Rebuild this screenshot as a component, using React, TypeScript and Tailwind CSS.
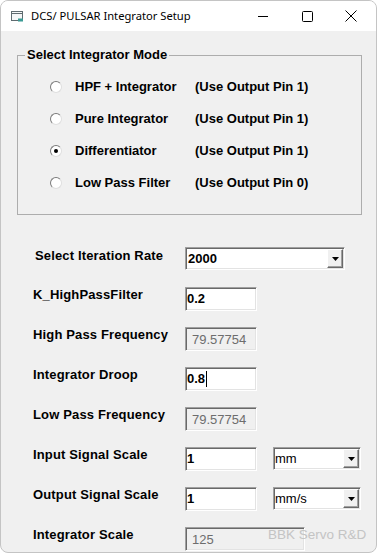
import React from 'react';

const modes = [
  { label: 'HPF + Integrator', pin: '(Use Output Pin 1)', checked: false },
  { label: 'Pure Integrator', pin: '(Use Output Pin 1)', checked: false },
  { label: 'Differentiator', pin: '(Use Output Pin 1)', checked: true },
  { label: 'Low Pass Filter', pin: '(Use Output Pin 0)', checked: false },
];

const sunken =
  'border border-t-[#a0a0a0] border-l-[#a0a0a0] border-r-[#ffffff] border-b-[#ffffff] shadow-[inset_1px_1px_0_#696969,inset_-1px_-1px_0_#e3e3e3]';

const Radio: React.FC<{ checked: boolean }> = ({ checked }) => (
  <div className="w-[12px] h-[12px] rounded-full bg-white border border-t-[#7a7a7a] border-l-[#7a7a7a] border-r-[#dedede] border-b-[#dedede] flex items-center justify-center">
    {checked && <div className="w-[4px] h-[4px] rounded-full bg-black" />}
  </div>
);

const TextBox: React.FC<{ value: string; disabled?: boolean; caret?: boolean; className?: string }> = ({
  value,
  disabled,
  caret,
  className = 'w-[72px]',
}) => (
  <div
    className={`${className} h-[24px] ${sunken} flex items-center ${
      disabled ? 'bg-[#f0f0f0] pl-[6px] pt-[1px] text-[#6d6d6d] font-normal' : 'bg-white pl-[1px] text-black font-bold'
    } text-[13px]`}
  >
    {value}
    {caret && <span className="ml-[1px] w-[1px] h-[16px] bg-black" />}
  </div>
);

const Combo: React.FC<{ value: string; bold?: boolean; className: string }> = ({ value, bold, className }) => (
  <div className={`${className} h-[23px] ${sunken} bg-white flex items-center`}>
    <span className={`flex-1 text-[13px] text-black ${bold ? 'font-bold pl-[2px]' : 'font-normal pl-[1px]'}`}>{value}</span>
    <div className="w-[16px] h-[19px] mr-[1px] bg-[#f0f0f0] border border-t-[#ffffff] border-l-[#ffffff] border-r-[#696969] border-b-[#696969] shadow-[inset_-1px_-1px_0_#a0a0a0] flex items-center justify-center">
      <svg width="7" height="4" viewBox="0 0 7 4">
        <path d="M0 0h7L3.5 4z" fill="#000" />
      </svg>
    </div>
  </div>
);

const Row: React.FC<{ label: string; lx?: string; ly?: string; children: React.ReactNode }> = ({
  label,
  lx = 'pl-[32px]',
  ly = '',
  children,
}) => (
  <div className="h-[40px] flex items-start">
    <div className={`w-[184px] ${lx} ${ly} leading-[16px] text-[13px] font-bold tracking-[0.15px] text-black`}>{label}</div>
    {children}
  </div>
);

export default function App() {
  return (
    <div
      className="w-[377px] h-[553px] overflow-hidden rounded-[8px] border border-[#c4c4c4] bg-[#f0f0f0] flex flex-col"
      style={{ fontFamily: '"Liberation Sans", Arial, sans-serif' }}
    >
      {/* title bar */}
      <div className="h-[30px] bg-white flex items-center shrink-0">
        <svg className="ml-[10px]" width="14" height="11" viewBox="0 0 14 11">
          <rect x="0.5" y="0.5" width="11" height="9" fill="#f4f6f7" stroke="#5f6b70" />
          <path d="M0.5 2.5h11" stroke="#5f6b70" />
          <path d="M7 7.5h5v3H7z" fill="#3a9a94" />
        </svg>
        <span className="ml-[6px] text-[11.2px] text-black" style={{ fontFamily: '"Noto Sans", sans-serif' }}>
          DCS/ PULSAR Integrator Setup
        </span>
        <div className="ml-auto mr-[3px] flex">
          <div className="w-[44px] h-[30px] flex items-center justify-center">
            <svg width="10" height="1" viewBox="0 0 10 1">
              <path d="M0 0.5h10" stroke="#000" />
            </svg>
          </div>
          <div className="w-[44px] h-[30px] flex items-center justify-center">
            <svg width="11" height="11" viewBox="0 0 11 11">
              <rect x="0.5" y="0.5" width="10" height="10" rx="1" fill="none" stroke="#000" />
            </svg>
          </div>
          <div className="w-[44px] h-[30px] flex items-center justify-center">
            <svg width="12" height="12" viewBox="0 0 12 12">
              <path d="M0.5 0.5l11 11M11.5 0.5l-11 11" stroke="#000" />
            </svg>
          </div>
        </div>
      </div>

      {/* mode group */}
      <fieldset className="mt-[16px] ml-[16px] w-[345px] border border-[#adadad] p-0 pb-[15px]">
        <legend className="ml-[7px] px-[2px] text-[13px] leading-[16px] font-bold text-black">Select Integrator Mode</legend>
        <div className="mt-[8px] flex flex-col">
          {modes.map((m) => (
            <div key={m.label} className="h-[32px] flex items-center pl-[32px]">
              <Radio checked={m.checked} />
              <span className="ml-[13px] w-[120px] text-[13px] font-bold text-black">{m.label}</span>
              <span className="text-[13px] font-bold text-black">{m.pin}</span>
            </div>
          ))}
        </div>
      </fieldset>

      {/* parameters */}
      <div className="mt-[32px] flex flex-col">
        <Row label="Select Iteration Rate" lx="pl-[34px]" ly="mt-[1px]">
          <Combo value="2000" bold className="w-[160px]" />
        </Row>
        <Row label="K_HighPassFilter" lx="pl-[32px]">
          <TextBox value="0.2" />
        </Row>
        <Row label="High Pass Frequency">
          <TextBox value="79.57754" disabled />
        </Row>
        <Row label="Integrator Droop">
          <TextBox value="0.8" caret />
        </Row>
        <Row label="Low Pass Frequency">
          <TextBox value="79.57754" disabled />
        </Row>
        <Row label="Input Signal Scale">
          <TextBox value="1" />
          <Combo value="mm" className="ml-[16px] w-[88px]" />
        </Row>
        <Row label="Output Signal Scale">
          <TextBox value="1" />
          <Combo value="mm/s" className="ml-[16px] w-[88px]" />
        </Row>
        <div className="relative">
          <Row label="Integrator Scale">
            <TextBox value="125" disabled className="w-[120px]" />
          </Row>
          <span className="absolute left-[267px] top-0 leading-[16px] text-[13.5px] text-[#c4c4c4]">BBK Servo R&amp;D</span>
        </div>
      </div>
    </div>
  );
}
